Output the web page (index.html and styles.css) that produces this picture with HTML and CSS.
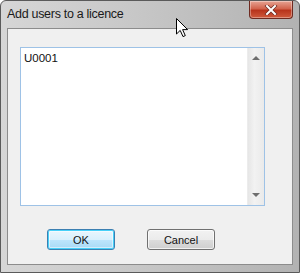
FILE: index.html
```html
<!DOCTYPE html>
<html lang="en">

<head>
    <meta charset="UTF-8">
    <title>Add users to a licence</title>
    <link rel="stylesheet" href="styles.css">
</head>

<body>

    <div class="window">
        <div class="titlebar">
            <p class="title">Add users to a licence</p>
            <div class="closebtn">
                <svg width="14" height="10" viewBox="0 0 14 10">
                    <path d="M3 1 L11 9 M11 1 L3 9" stroke="#6a2a22" stroke-width="3.4" stroke-linecap="square"/>
                    <path d="M3 1 L11 9 M11 1 L3 9" stroke="#fff" stroke-width="2" stroke-linecap="square"/>
                </svg>
            </div>
        </div>
        <div class="client">
            <div class="listbox">
                <div class="items">
                    <p class="item">U0001</p>
                </div>
                <div class="scrollbar">
                    <span class="arrow up"></span>
                    <span class="arrow down"></span>
                </div>
            </div>
            <div class="buttons">
                <button class="btn default">OK</button>
                <button class="btn">Cancel</button>
            </div>
        </div>

        <svg class="cursor" width="13" height="20" viewBox="0 0 13 20">
            <path d="M0.5 0.5 L0.5 16 L4.2 12.4 L7 18.6 L9.3 17.6 L6.6 11.6 L11.6 11.6 Z" fill="#fff" stroke="#000" stroke-width="1" stroke-linejoin="miter"/>
        </svg>
    </div>

</body>

</html>
```

FILE: styles.css
```css
* {
    margin: 0;
    padding: 0;
    box-sizing: border-box;
    font-family: "Liberation Sans", "DejaVu Sans", sans-serif;
}

body {
    width: 300px;
    height: 273px;
    background-color: #ffffff;
    overflow: hidden;
}

.window {
    position: relative;
    width: 300px;
    height: 273px;
    display: flex;
    flex-direction: column;
    padding: 0 6px 7px 6px;
    border: 1px solid #5a5a5a;
    border-radius: 6px 6px 0 0;
    background: linear-gradient(to right, #d6d6d6 0%, #c9c9c9 40%, #b2b2b2 100%);
}

.titlebar {
    height: 27px;
    display: flex;
    justify-content: space-between;
    align-items: flex-start;
}

.title {
    font-size: 12.5px;
    color: #1a1a1a;
    margin-top: 6px;
    letter-spacing: -0.3px;
}

.closebtn {
    width: 44px;
    height: 18px;
    display: flex;
    justify-content: center;
    align-items: center;
    border: 1px solid #6e2a20;
    border-top: none;
    border-radius: 0 0 4px 4px;
    background: linear-gradient(to bottom, #e7a494 0%, #d2634c 45%, #b8341c 55%, #cf5a3c 100%);
    box-shadow: inset 0 0 0 1px rgba(255, 255, 255, 0.35);
}

.client {
    flex: 1;
    display: flex;
    flex-direction: column;
    background-color: #f0f0f0;
    border: 1px solid #8c8c8c;
    padding: 18px 0 0 12px;
}

.listbox {
    width: 245px;
    height: 159px;
    display: flex;
    border: 1px solid #9ec2e6;
    background-color: #ffffff;
}

.items {
    flex: 1;
    padding: 4px 3px;
}

.item {
    font-size: 11.5px;
    color: #111;
}

.scrollbar {
    width: 17px;
    display: flex;
    flex-direction: column;
    justify-content: space-between;
    align-items: center;
    padding: 8px 0 8px 0;
    background: linear-gradient(to right, #e6e6e6, #f2f2f2 40%, #eaeaea);
    border-left: 1px solid #ececec;
}

.arrow {
    width: 0;
    height: 0;
    border-left: 4px solid transparent;
    border-right: 4px solid transparent;
}

.up {
    border-bottom: 4px solid #6e6e6e;
}

.down {
    border-top: 4px solid #6e6e6e;
}

.buttons {
    display: flex;
    gap: 32px;
    margin-top: 23px;
    padding-left: 27px;
}

.btn {
    width: 68px;
    height: 21px;
    font-size: 11px;
    color: #111;
    border: 1px solid #707070;
    border-radius: 3px;
    background: linear-gradient(to bottom, #f2f2f2 0%, #ebebeb 50%, #dddddd 51%, #cfcfcf 100%);
    box-shadow: inset 0 0 0 1px rgba(255, 255, 255, 0.7);
}

.default {
    border-color: #3c7fb1;
    background: linear-gradient(to bottom, #eaf6fd 0%, #d9f0fc 50%, #bee6fd 51%, #a7d9f5 100%);
    box-shadow: inset 0 0 0 1px #48d0f8, inset 0 0 0 2px rgba(255, 255, 255, 0.5);
}

.cursor {
    position: absolute;
    left: 175px;
    top: 17px;
}
```
